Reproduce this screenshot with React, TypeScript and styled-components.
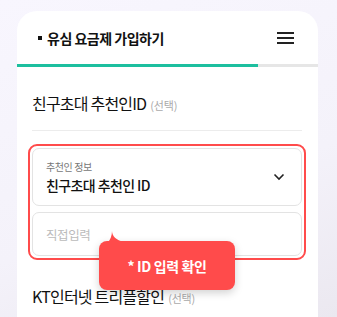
import React from "react";
import styled, { createGlobalStyle } from "styled-components";

const Global = createGlobalStyle`
  html, body {
    margin: 0;
    padding: 0;
    height: 100%;
    overflow: hidden;
  }
  body {
    background: linear-gradient(160deg, #f8f6fe 0%, #f4f2fa 60%, #ebe8f0 100%);
    font-family: "Noto Sans CJK KR", "Noto Sans", sans-serif;
    color: #111;
  }
`;

const Page = styled.div`
  padding: 11px 0 0 17px;
  height: 317px;
  box-sizing: border-box;
`;

const Card = styled.div`
  width: 301px;
  height: 100%;
  background: #fff;
  border-radius: 20px 20px 0 0;
  overflow: hidden;
`;

const Header = styled.div`
  height: 53px;
  display: flex;
  align-items: center;
  justify-content: space-between;
  padding: 0 24px 0 21px;
  box-sizing: border-box;
`;

const Title = styled.h1`
  margin: 0;
  display: flex;
  align-items: center;
  gap: 5px;
  font-size: 14px;
  font-weight: 700;
  letter-spacing: -0.5px;
  &::before {
    content: "";
    width: 4px;
    height: 4px;
    background: #111;
  }
`;

const Menu = styled.button`
  border: 0;
  background: none;
  padding: 0;
  width: 17px;
  display: flex;
  flex-direction: column;
  gap: 3px;
  span {
    height: 2px;
    background: #222;
  }
`;

const Progress = styled.div`
  height: 3px;
  background: #e6e6e6;
`;

const ProgressFill = styled.div`
  height: 100%;
  background: #1dbf9f;
`;

const Body = styled.div`
  padding: 0 16px 0 15px;
`;

const SectionTitle = styled.h2<{ $line?: boolean }>`
  margin: 0;
  font-size: 16px;
  line-height: 22px;
  font-weight: 400;
  letter-spacing: -0.8px;
  padding: ${(p) => (p.$line ? "25px 0 14px" : "0")};
  border-bottom: ${(p) => (p.$line ? "1px solid #ececec" : "none")};
  small {
    font-size: 11px;
    color: #aaa;
    margin-left: 4px;
    letter-spacing: -0.2px;
  }
`;

const Alert = styled.div`
  position: relative;
  z-index: 1;
  margin: 13px -4px 25px -4px;
  padding: 2px;
  border: 2px solid #ff4b4b;
  border-radius: 9px;
  display: flex;
  flex-direction: column;
  gap: 6px;
`;

const SelectBox = styled.div`
  height: 58px;
  box-sizing: border-box;
  border: 1px solid #e3e3e3;
  border-radius: 7px;
  padding: 0 16px 0 13px;
  display: flex;
  align-items: center;
  justify-content: space-between;
`;

const SelectText = styled.div`
  display: flex;
  flex-direction: column;
  gap: 1px;
  label {
    font-size: 10px;
    color: #777;
    letter-spacing: -0.4px;
  }
  strong {
    font-size: 14px;
    font-weight: 500;
    letter-spacing: -0.6px;
  }
`;

const Input = styled.input`
  height: 44px;
  box-sizing: border-box;
  border: 1px solid #e3e3e3;
  border-radius: 7px;
  padding: 0 13px;
  font-family: inherit;
  font-size: 12.5px;
  letter-spacing: -0.4px;
  outline: none;
  &::placeholder {
    color: #bbb;
  }
`;

const Tooltip = styled.div`
  position: absolute;
  left: 69px;
  top: 95px;
  width: 136px;
  height: 49px;
  background: #ff4b4b;
  border-radius: 8px;
  box-shadow: 0 3px 8px rgba(0, 0, 0, 0.18);
  color: #fff;
  font-size: 14px;
  font-weight: 700;
  letter-spacing: -0.4px;
  display: flex;
  align-items: center;
  justify-content: center;
  svg {
    position: absolute;
    left: 9px;
    top: -10px;
  }
`;

export default function App() {
  return (
    <>
      <Global />
      <Page>
        <Card>
          <Header>
            <Title>유심 요금제 가입하기</Title>
            <Menu aria-label="menu">
              <span />
              <span />
              <span />
            </Menu>
          </Header>
          <Progress>
            <ProgressFill style={{ width: "80%" }} />
          </Progress>
          <Body>
            <SectionTitle $line>
              친구초대 추천인ID<small>(선택)</small>
            </SectionTitle>
            <Alert>
              <SelectBox>
                <SelectText>
                  <label>추천인 정보</label>
                  <strong>친구초대 추천인 ID</strong>
                </SelectText>
                <svg width="12" height="8" viewBox="0 0 12 8">
                  <path d="M1.5 1.5 L6 6 L10.5 1.5" fill="none" stroke="#222" strokeWidth="1.6" />
                </svg>
              </SelectBox>
              <Input placeholder="직접입력" />
              <Tooltip>
                <svg width="16" height="11" viewBox="0 0 16 11">
                  <path d="M4 0 C4 5 8 9 16 11 L0 11 C2 9 4 5 4 0 Z" fill="#ff4b4b" />
                </svg>
                * ID 입력 확인
              </Tooltip>
            </Alert>
            <SectionTitle>
              KT인터넷 트리플할인<small>(선택)</small>
            </SectionTitle>
          </Body>
        </Card>
      </Page>
    </>
  );
}
